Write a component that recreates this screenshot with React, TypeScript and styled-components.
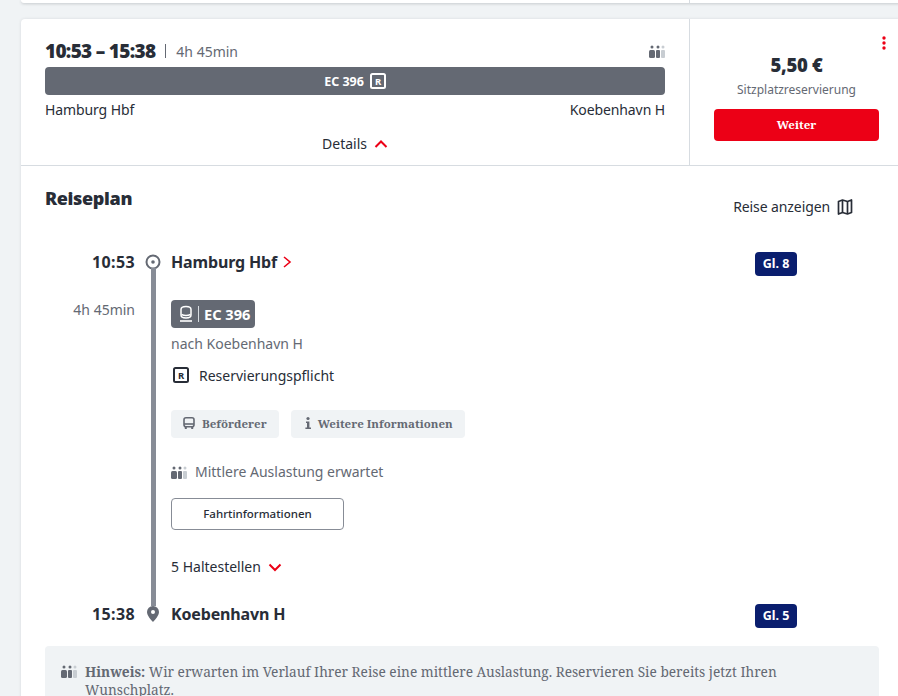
import React from 'react'
import styled, { createGlobalStyle } from 'styled-components'

const GlobalStyle = createGlobalStyle`
  html, body {
    margin: 0;
    height: 696px;
    overflow: hidden;
    background: #f0f3f5;
    color: #282d37;
    font-family: 'Noto Sans', 'Open Sans', sans-serif;
    font-size: 14px;
  }
  * { box-sizing: border-box; }
`

const Page = styled.div`
  width: 882px;
  margin-left: 21px;
`

const PrevCard = styled.div`
  height: 3px;
  background: #fff;
  border-radius: 0 0 4px 4px;
  box-shadow: 0 1px 3px rgba(40, 45, 55, 0.2);
  display: flex;
  justify-content: flex-end;
  margin-bottom: 16px;
  div {
    width: 214px;
    border-left: 1px solid #d7dce1;
  }
`

const Card = styled.section`
  background: #fff;
  border-radius: 4px 4px 0 0;
  box-shadow: 0 0 3px rgba(40, 45, 55, 0.12);
`

const Summary = styled.div`
  display: flex;
  height: 147px;
  border-bottom: 1px solid #d7dce1;
`

const Connection = styled.div`
  width: 669px;
  padding: 20px 24px 0;
  border-right: 1px solid #d7dce1;
`

const TopLine = styled.div`
  display: flex;
  align-items: center;
  height: 24px;
  margin-bottom: 4px;
`

const Times = styled.span`
  font-size: 19px;
  font-weight: 900;
  letter-spacing: -0.7px;
`

const Duration = styled.span`
  color: #646973;
  font-size: 14px;
  margin-left: 10px;
  padding-left: 11px;
  background: linear-gradient(#646973, #646973) left center / 1px 14px no-repeat;
`

const TopIcon = styled.span`
  margin-left: auto;
  display: flex;
`

const TrainBar = styled.div`
  height: 28px;
  border-radius: 4px;
  background: #646973;
  color: #fff;
  font-size: 12.5px;
  font-weight: 700;
  display: flex;
  align-items: center;
  justify-content: center;
  gap: 6px;
`

const Ends = styled.div`
  display: flex;
  justify-content: space-between;
  margin-top: 5px;
  line-height: 20px;
  letter-spacing: -0.1px;
`

const DetailsToggle = styled.div`
  display: flex;
  justify-content: center;
  align-items: center;
  gap: 7px;
  margin-top: 14px;
  line-height: 20px;
`

const PriceBox = styled.div`
  position: relative;
  width: 213px;
  padding: 33px 24px 0;
  text-align: center;
`

const Kebab = styled.span`
  position: absolute;
  left: 192px;
  top: 17px;
  display: flex;
`

const Price = styled.div`
  font-size: 18.5px;
  font-weight: 900;
  line-height: 26px;
  letter-spacing: -0.3px;
`

const PriceLabel = styled.div`
  color: #646973;
  font-size: 12px;
  line-height: 16px;
  margin-top: 4px;
`

const WeiterButton = styled.button`
  display: block;
  width: 165px;
  height: 32px;
  margin-top: 11px;
  padding: 0 0 2px;
  border: 0;
  border-radius: 4px;
  background: #ec0016;
  color: #fff;
  font: 700 11.5px 'Noto Serif', 'Noto Sans', serif;
`

const Plan = styled.div`
  padding: 0 24px;
`

const PlanHead = styled.div`
  display: flex;
  justify-content: space-between;
  align-items: flex-start;
  height: 84px;
`

const PlanTitle = styled.h2`
  margin: 19px 0 0;
  font-size: 18px;
  font-weight: 900;
  line-height: 26px;
  letter-spacing: -0.35px;
`

const ShowTrip = styled.div`
  display: flex;
  align-items: center;
  gap: 6px;
  margin: 30px 25px 0 0;
  line-height: 22px;
  letter-spacing: -0.1px;
`

const Timeline = styled.div`
  display: grid;
  grid-template-columns: 90px 36px 1fr auto;
  margin-right: 82px;
`

const StopTime = styled.div`
  text-align: right;
  font-size: 16px;
  font-weight: 700;
  line-height: 24px;
  letter-spacing: 0.4px;
`

const StopMark = styled.div`
  display: flex;
  justify-content: center;
  align-items: center;
`

const StopName = styled.div`
  display: flex;
  align-items: center;
  gap: 3px;
  font-size: 16px;
  font-weight: 700;
  line-height: 24px;
  letter-spacing: -0.15px;
`

const Platform = styled.div`
  height: 24px;
  margin: 2px 0 -2px;
  padding: 0 7.5px;
  border-radius: 4px;
  background: #0a1e6e;
  color: #fff;
  font-size: 12.5px;
  font-weight: 700;
  line-height: 24px;
`

const TravelTime = styled.div`
  text-align: right;
  color: #646973;
  padding-top: 25px;
  line-height: 22px;
`

const Rail = styled.div`
  justify-self: center;
  width: 5px;
  margin-top: -6px;
  margin-bottom: -4px;
  background: #878c96;
`

const Leg = styled.div`
  grid-column: 3 / 5;
  padding-top: 26px;
  height: 328px;
`

const TrainChip = styled.div`
  display: inline-flex;
  align-items: center;
  height: 28px;
  padding: 0 5px 0 8px;
  border-radius: 4px;
  background: #646973;
  color: #fff;
  font-size: 14.6px;
  font-weight: 700;
  span {
    margin-left: 5px;
    padding-left: 5px;
    border-left: 1px solid #d7dce1;
    line-height: 16px;
  }
`

const Direction = styled.div`
  color: #646973;
  line-height: 20px;
  margin-top: 6px;
`

const Reservation = styled.div`
  display: flex;
  align-items: center;
  gap: 10px;
  height: 20px;
  margin-top: 11px;
  padding-left: 2px;
`

const InfoButtons = styled.div`
  display: flex;
  gap: 12px;
  margin-top: 25px;
`

const InfoButton = styled.div<{ $gap: number }>`
  display: flex;
  align-items: center;
  gap: ${props => props.$gap}px;
  height: 28px;
  padding: 0 12px 2px;
  border-radius: 4px;
  background: #f0f3f5;
  color: #646973;
  font: 700 11.5px 'Noto Serif', 'Noto Sans', serif;
`

const Occupancy = styled.div`
  display: flex;
  align-items: center;
  gap: 8px;
  color: #646973;
  line-height: 20px;
  margin-top: 24px;
`

const OutlineButton = styled.div`
  width: 173px;
  height: 32px;
  margin-top: 16px;
  border: 1px solid #878c96;
  border-radius: 4px;
  font-size: 11.5px;
  font-weight: 500;
  line-height: 30px;
  text-align: center;
`

const StopsToggle = styled.div`
  display: flex;
  align-items: center;
  gap: 7px;
  line-height: 20px;
  margin-top: 27px;
`

const Notice = styled.div`
  display: flex;
  gap: 8px;
  margin-top: 20px;
  padding: 17px 40px 0 16px;
  height: 80px;
  border-radius: 4px 4px 0 0;
  background: #f0f3f5;
  color: #646973;
  font-family: 'Noto Serif', 'Noto Sans', serif;
  font-size: 13.7px;
  line-height: 18px;
  b { font-weight: 700; }
  svg { flex: none; margin-top: 2px; }
`

const Chevron = ({ up, right, down }: { up?: boolean; right?: boolean; down?: boolean }) => (
  <svg width="14" height="14" viewBox="0 0 14 14" fill="none" stroke="#ec0016" strokeWidth="2">
    {up && <path d="M1.5 10 7 4.5 12.5 10" />}
    {down && <path d="M1.5 4.5 7 10l5.5-5.5" />}
    {right && <path d="M4 2 10 7l-6 5" strokeWidth="1.6" />}
  </svg>
)

const OccupancyIcon = () => (
  <svg width="16" height="13" viewBox="0 0 16 13" fill="#646973">
    <circle cx="3" cy="2" r="1.5" />
    <rect x="0" y="5" width="6" height="8" rx="1.5" />
    <circle cx="9" cy="2" r="1.5" />
    <rect x="7" y="5" width="4" height="8" rx="1" />
    <g fill="#c8cdd2">
      <circle cx="14" cy="2" r="1.5" />
      <rect x="12" y="5" width="4" height="8" rx="1" />
    </g>
  </svg>
)

const ReservedIcon = ({ color, size }: { color: string; size: number }) => (
  <svg width={size} height={size} viewBox="0 0 16 16">
    <rect x="1" y="1" width="14" height="14" rx="1.5" fill="none" stroke={color} strokeWidth="2" />
    <text x="8" y="11.5" textAnchor="middle" fontSize="9.5" fontWeight="700" fill={color} fontFamily="Noto Sans">R</text>
  </svg>
)

const StartIcon = () => (
  <svg width="16" height="16" viewBox="0 0 16 16">
    <circle cx="8" cy="8" r="6.5" fill="#fff" stroke="#646973" strokeWidth="2" />
    <circle cx="8" cy="8" r="1.8" fill="#646973" />
  </svg>
)

const PinIcon = () => (
  <svg width="14" height="18" viewBox="0 0 14 18">
    <path d="M7 1a6 6 0 0 0-6 6c0 3.6 3.8 7.6 6 10 2.2-2.4 6-6.4 6-10a6 6 0 0 0-6-6z" fill="#646973" />
    <circle cx="7" cy="7" r="2" fill="#fff" />
  </svg>
)

const TrainIcon = () => (
  <svg width="14" height="18" viewBox="0 0 14 18" fill="none" stroke="#fff" strokeWidth="1.5">
    <path d="M2 10V4.5C2 2.5 4 1.5 7 1.5s5 1 5 3V10c0 2-1.5 3-5 3s-5-1-5-3z" />
    <path d="M2.5 9.5c2.5 1 6.5 1 9 0" />
    <path d="M1 16h12" strokeWidth="1.6" />
  </svg>
)

const BusIcon = () => (
  <svg width="12" height="14" viewBox="0 0 12 14" fill="none" stroke="#646973" strokeWidth="1.6">
    <rect x="1" y="1.8" width="10" height="9" rx="2" />
    <path d="M1 8h10" />
    <path d="M2.8 11v2M9.2 11v2" strokeWidth="2" />
  </svg>
)

const InfoIcon = () => (
  <svg width="10" height="14" viewBox="0 0 10 14" fill="#646973">
    <circle cx="5" cy="2.5" r="1.6" />
    <path d="M3 5.5h3.4V11.5H8V13H2.4v-1.5H4V7H3z" />
  </svg>
)

const MapIcon = () => (
  <svg width="18" height="18" viewBox="0 0 18 18" fill="none" stroke="#282d37" strokeWidth="1.7" strokeLinejoin="round">
    <path d="M2.5 3.5 6.5 2l5 1.5 4-1.5v12.5l-4 1.5-5-1.5-4 1.5z" />
    <path d="M6.5 2v12.5M11.5 3.5V16" />
  </svg>
)

const KebabIcon = () => (
  <svg width="4" height="14" viewBox="0 0 4 14" fill="#ec0016">
    <circle cx="2" cy="2" r="1.7" />
    <circle cx="2" cy="7" r="1.7" />
    <circle cx="2" cy="12" r="1.7" />
  </svg>
)

const App = () => {
  return (
    <Page>
      <GlobalStyle />
      <PrevCard><div /></PrevCard>
      <Card>
        <Summary>
          <Connection>
            <TopLine>
              <Times>10:53 – 15:38</Times>
              <Duration>4h 45min</Duration>
              <TopIcon><OccupancyIcon /></TopIcon>
            </TopLine>
            <TrainBar>
              EC 396 <ReservedIcon color="#fff" size={16} />
            </TrainBar>
            <Ends>
              <span>Hamburg Hbf</span>
              <span>Koebenhavn H</span>
            </Ends>
            <DetailsToggle>Details <Chevron up /></DetailsToggle>
          </Connection>
          <PriceBox>
            <Kebab><KebabIcon /></Kebab>
            <Price>5,50 €</Price>
            <PriceLabel>Sitzplatzreservierung</PriceLabel>
            <WeiterButton>Weiter</WeiterButton>
          </PriceBox>
        </Summary>
        <Plan>
          <PlanHead>
            <PlanTitle>Reiseplan</PlanTitle>
            <ShowTrip>Reise anzeigen <MapIcon /></ShowTrip>
          </PlanHead>
          <Timeline>
            <StopTime>10:53</StopTime>
            <StopMark><StartIcon /></StopMark>
            <StopName>Hamburg Hbf <Chevron right /></StopName>
            <Platform>Gl. 8</Platform>

            <TravelTime>4h 45min</TravelTime>
            <Rail />
            <Leg>
              <TrainChip><TrainIcon /><span>EC 396</span></TrainChip>
              <Direction>nach Koebenhavn H</Direction>
              <Reservation><ReservedIcon color="#282d37" size={16} /> Reservierungspflicht</Reservation>
              <InfoButtons>
                <InfoButton $gap={7}><BusIcon /> Beförderer</InfoButton>
                <InfoButton $gap={5}><InfoIcon /> Weitere Informationen</InfoButton>
              </InfoButtons>
              <Occupancy><OccupancyIcon /> Mittlere Auslastung erwartet</Occupancy>
              <OutlineButton>Fahrtinformationen</OutlineButton>
              <StopsToggle>5 Haltestellen <Chevron down /></StopsToggle>
            </Leg>

            <StopTime>15:38</StopTime>
            <StopMark><PinIcon /></StopMark>
            <StopName>Koebenhavn H</StopName>
            <Platform>Gl. 5</Platform>
          </Timeline>
          <Notice>
            <OccupancyIcon />
            <div>
              <b>Hinweis:</b> Wir erwarten im Verlauf Ihrer Reise eine mittlere Auslastung. Reservieren Sie bereits jetzt Ihren Wunschplatz.
            </div>
          </Notice>
        </Plan>
      </Card>
    </Page>
  )
}

export default App
